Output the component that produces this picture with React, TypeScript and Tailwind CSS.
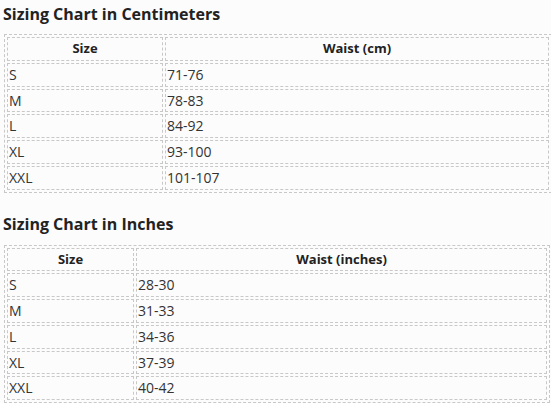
import React from "react";

type Row = { size: string; waist: string };

const cmRows: Row[] = [
  { size: "S", waist: "71-76" },
  { size: "M", waist: "78-83" },
  { size: "L", waist: "84-92" },
  { size: "XL", waist: "93-100" },
  { size: "XXL", waist: "101-107" },
];

const inchRows: Row[] = [
  { size: "S", waist: "28-30" },
  { size: "M", waist: "31-33" },
  { size: "L", waist: "34-36" },
  { size: "XL", waist: "37-39" },
  { size: "XXL", waist: "40-42" },
];

const cell = "border border-dashed border-[#c8c8c8] p-px align-middle";

const SizeTable = ({
  rows,
  label,
  tableClass,
  firstCol,
}: {
  rows: Row[];
  label: string;
  tableClass: string;
  firstCol: string;
}) => {
  return (
    <table
      className={`${tableClass} ml-[4px] border-separate border-spacing-[2px] border border-dashed border-[#c8c8c8] text-[14px] leading-[19.75px] text-[#333]`}
    >
      <thead>
        <tr>
          <th className={`${cell} ${firstCol} text-center font-bold text-[#222] text-[13px]`}>Size</th>
          <th className={`${cell} text-center font-bold text-[#222] text-[13px]`}>{label}</th>
        </tr>
      </thead>
      <tbody>
        {rows.map((r) => (
          <tr key={r.size}>
            <td className={`${cell} text-left`}>{r.size}</td>
            <td className={`${cell} text-left`}>{r.waist}</td>
          </tr>
        ))}
      </tbody>
    </table>
  );
};

export default function App() {
  return (
    <div className="min-h-[403px] w-[551px] overflow-hidden bg-[#fcfcfc] pt-[3px] font-['Open_Sans',sans-serif]">
      <h3 className="ml-[3px] mb-[9px] text-[16px] leading-[22px] font-bold text-[#222]">
        Sizing Chart in Centimeters
      </h3>
      <SizeTable rows={cmRows} label="Waist (cm)" tableClass="w-[548px]" firstCol="w-[156px]" />
      <h3 className="ml-[3px] mt-[20px] mb-[10px] text-[16px] leading-[22px] font-bold text-[#222]">
        Sizing Chart in Inches
      </h3>
      <SizeTable rows={inchRows} label="Waist (inches)" tableClass="w-[546px]" firstCol="w-[127px]" />
    </div>
  );
}
